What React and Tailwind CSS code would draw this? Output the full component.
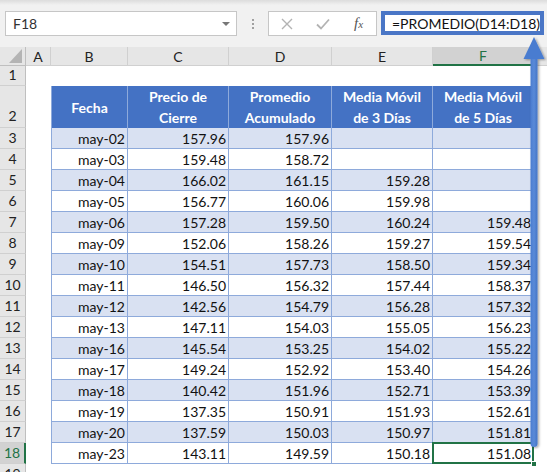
import React from "react";

const rows = [
  ["may-02", "157.96", "157.96", "", ""],
  ["may-03", "159.48", "158.72", "", ""],
  ["may-04", "166.02", "161.15", "159.28", ""],
  ["may-05", "156.77", "160.06", "159.98", ""],
  ["may-06", "157.28", "159.50", "160.24", "159.48"],
  ["may-09", "152.06", "158.26", "159.27", "159.54"],
  ["may-10", "154.51", "157.73", "158.50", "159.34"],
  ["may-11", "146.50", "156.32", "157.44", "158.37"],
  ["may-12", "142.56", "154.79", "156.28", "157.32"],
  ["may-13", "147.11", "154.03", "155.05", "156.23"],
  ["may-16", "145.54", "153.25", "154.02", "155.22"],
  ["may-17", "149.24", "152.92", "153.40", "154.26"],
  ["may-18", "140.42", "151.96", "152.71", "153.39"],
  ["may-19", "137.35", "150.91", "151.93", "152.61"],
  ["may-20", "137.59", "150.03", "150.97", "151.81"],
  ["may-23", "143.11", "149.59", "150.18", "151.08"],
];

const widths = ["w-[77px]", "w-[101px]", "w-[103px]", "w-[101px]", "w-[101px]"];

const RowHeader = ({ n, active, tall }) => (
  <div
    className={`w-[26px] shrink-0 flex items-end justify-center border-b border-[#d0d0d0] ${
      active
        ? "bg-[#d2d2d2] text-[#217346] border-r-2 border-r-[#217346]"
        : "bg-[#e6e6e6] text-[#222] border-r border-r-[#bfbfbf]"
    } ${tall ? "pb-[1px]" : ""}`}
  >
    <span className="leading-[20px]">{n}</span>
  </div>
);

const Arrow = () => (
  <svg
    className="absolute left-0 top-0 pointer-events-none"
    width="547"
    height="472"
    viewBox="0 0 547 472"
  >
    <defs>
      <filter id="sh" x="-50%" y="-5%" width="200%" height="110%">
        <feDropShadow dx="1.5" dy="1" stdDeviation="1.2" floodColor="#000" floodOpacity="0.35" />
      </filter>
      <linearGradient id="g" x1="0" x2="1" y1="0" y2="0">
        <stop offset="0" stopColor="#4a7cd0" />
        <stop offset="0.5" stopColor="#5a8ad8" />
        <stop offset="1" stopColor="#4474c6" />
      </linearGradient>
    </defs>
    <g filter="url(#sh)">
      <rect x="530.5" y="55" width="7" height="392" rx="3.5" fill="url(#g)" />
      <polygon points="523.5,59 534,37 544.5,59" fill="#4a7cd0" />
    </g>
  </svg>
);

export default function App() {
  return (
    <div
      className="relative w-[547px] h-[472px] overflow-hidden bg-white text-[14px] text-[#111]"
      style={{ fontFamily: "Lato, 'Liberation Sans', sans-serif" }}
    >
      {/* formula bar band */}
      <div className="h-[47px] bg-gradient-to-b from-[#dcdcdc] via-[#f1f1f1] to-[#f1f1f1] [background-size:100%_10px] bg-no-repeat bg-[#f1f1f1] pt-[11px] flex items-start">
        <div className="ml-[5px] w-[232px] h-[25px] bg-white border border-[#c6c6c6] flex items-center pl-[7px] pr-[6px] text-[#333]">
          <span className="flex-1">F18</span>
          <span className="w-0 h-0 border-l-[4px] border-r-[4px] border-t-[4px] border-l-transparent border-r-transparent border-t-[#777]" />
        </div>
        <div className="w-[31px] h-[25px] flex flex-col items-center justify-center gap-[2px]">
          <span className="w-[2px] h-[2px] bg-[#a0a0a0]" />
          <span className="w-[2px] h-[2px] bg-[#a0a0a0]" />
          <span className="w-[2px] h-[2px] bg-[#a0a0a0]" />
        </div>
        <div className="w-[109px] h-[25px] bg-white border border-[#c6c6c6] flex items-center">
          <svg width="12" height="12" viewBox="0 0 12 12" className="ml-[12px]">
            <path d="M1 1 L11 11 M11 1 L1 11" stroke="#b3b3b3" strokeWidth="1.4" />
          </svg>
          <svg width="14" height="12" viewBox="0 0 14 12" className="ml-[23px]">
            <path d="M1 6.5 L5 10.5 L13 1.5" stroke="#b3b3b3" strokeWidth="1.8" fill="none" />
          </svg>
          <span
            className="ml-[24px] text-[15px] text-[#555] italic"
            style={{ fontFamily: "'Liberation Serif', serif" }}
          >
            f<span className="text-[11px]">x</span>
          </span>
        </div>
        <div className="ml-[4px] w-[163px] h-[24px] bg-white border-[4px] border-[#4a76c6] flex items-center pl-[7px] text-[14px] text-[#111] whitespace-nowrap overflow-hidden">
          =PROMEDIO(D14:D18)
        </div>
      </div>

      {/* column headers */}
      <div className="flex h-[19px] bg-[#e6e6e6] text-[#222]">
        <div className="w-[26px] shrink-0 border-r border-b border-[#bfbfbf] relative">
          <svg className="absolute right-[3px] bottom-[2px]" width="13" height="14" viewBox="0 0 13 14">
            <polygon points="13,0 13,14 0,14" fill="#b4b4b4" />
          </svg>
        </div>
        <div className="w-[25px] shrink-0 border-r border-b border-[#d0d0d0] flex items-center justify-center">A</div>
        {["B", "C", "D", "E"].map((c, i) => (
          <div key={c} className={`${widths[i]} shrink-0 border-r border-b border-[#d0d0d0] flex items-center justify-center`}>
            {c}
          </div>
        ))}
        <div className="w-[101px] shrink-0 bg-[#d2d2d2] text-[#217346] border-r border-[#d0d0d0] border-b-2 border-b-[#217346] flex items-center justify-center">
          F
        </div>
        <div className="flex-1 border-b border-[#d0d0d0]" />
      </div>

      {/* row 1 */}
      <div className="flex h-[20px]">
        <RowHeader n={1} />
        <div className="flex-1" />
      </div>

      {/* row 2: table header */}
      <div className="flex h-[42px]">
        <RowHeader n={2} tall />
        <div className="w-[25px] shrink-0" />
        {["Fecha", "Precio de\nCierre", "Promedio\nAcumulado", "Media Móvil\nde 3 Días", "Media Móvil\nde 5 Días"].map((t, i) => (
          <div
            key={i}
            className={`${widths[i]} shrink-0 bg-[#4472c4] text-white font-bold text-center whitespace-pre-line leading-[21px] flex items-center justify-center border-r border-[#8eaadb] ${
              i === 0 ? "border-l" : ""
            } ${i === 4 ? "border-r-[#4472c4]" : ""}`}
          >
            {t}
          </div>
        ))}
        <div className="flex-1" />
      </div>

      {/* data rows */}
      {rows.map((r, ri) => {
        const last = ri === rows.length - 1;
        return (
          <div key={ri} className="flex h-[21px]">
            <RowHeader n={ri + 3} active={last} />
            <div className="w-[25px] shrink-0" />
            {r.map((v, ci) => {
              const sel = last && ci === 4;
              return (
                <div
                  key={ci}
                  className={`${widths[ci]} shrink-0 relative flex items-center justify-end pr-[2px] border-r border-b border-[#8eaadb] ${
                    ci === 0 ? "border-l" : ""
                  } ${ri % 2 === 0 ? "bg-[#d9e1f2]" : "bg-white"}`}
                >
                  {v}
                  {sel && (
                    <>
                      <span className="absolute -left-[1px] -top-[1px] right-[-1px] bottom-[-1px] border-2 border-[#217346]" />
                      <span className="absolute right-[-4px] bottom-[-4px] w-[6px] h-[6px] bg-[#217346] border border-white" />
                    </>
                  )}
                </div>
              );
            })}
            <div className="flex-1" />
          </div>
        );
      })}

      {/* row 19 partial */}
      <div className="flex h-[21px]">
        <RowHeader n={19} />
        <div className="flex-1" />
      </div>

      <Arrow />
    </div>
  );
}
